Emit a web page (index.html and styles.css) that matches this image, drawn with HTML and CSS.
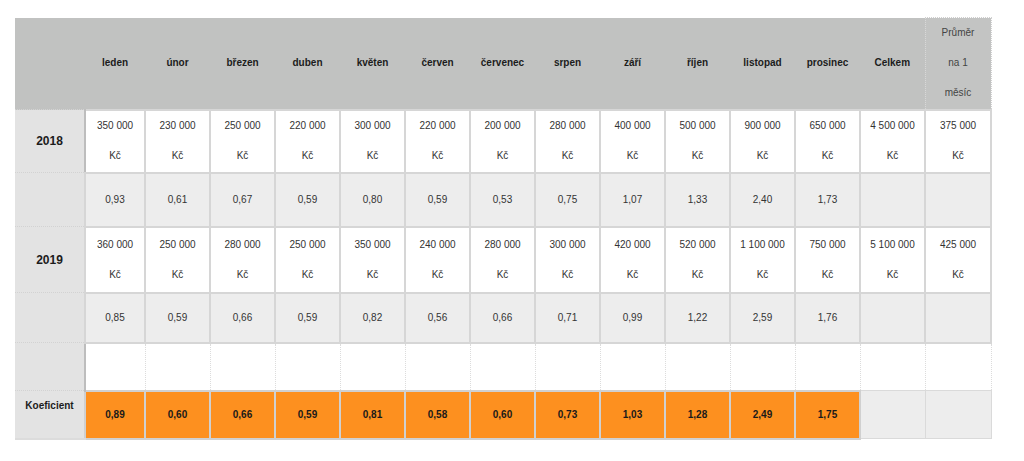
FILE: index.html
```html
<!DOCTYPE html>
<html lang="cs">
<head>
<meta charset="utf-8">
<title>Koeficienty</title>
<link rel="stylesheet" href="styles.css">
</head>
<body>
<div class="page">
<table class="grid">
  <colgroup>
    <col class="c-label"><col class="c-first">
    <col class="c-m"><col class="c-m"><col class="c-m"><col class="c-m"><col class="c-m"><col class="c-m"><col class="c-m"><col class="c-m"><col class="c-m"><col class="c-m"><col class="c-m"><col class="c-m">
    <col class="c-avg">
  </colgroup>
  <thead>
    <tr class="r-head">
      <th class="h"></th>
      <th class="h">leden</th><th class="h">únor</th><th class="h">březen</th><th class="h">duben</th><th class="h">květen</th><th class="h">červen</th><th class="h">červenec</th><th class="h">srpen</th><th class="h">září</th><th class="h">říjen</th><th class="h">listopad</th><th class="h">prosinec</th><th class="h">Celkem</th>
      <th class="h h-avg">Průměr<br>na 1<br>měsíc</th>
    </tr>
  </thead>
  <tbody>
    <tr class="r-val1">
      <th class="year">2018</th>
      <td class="v">350 000<br>Kč</td><td class="v">230 000<br>Kč</td><td class="v">250 000<br>Kč</td><td class="v">220 000<br>Kč</td><td class="v">300 000<br>Kč</td><td class="v">220 000<br>Kč</td><td class="v">200 000<br>Kč</td><td class="v">280 000<br>Kč</td><td class="v">400 000<br>Kč</td><td class="v">500 000<br>Kč</td><td class="v">900 000<br>Kč</td><td class="v">650 000<br>Kč</td><td class="v">4 500 000<br>Kč</td><td class="v">375 000<br>Kč</td>
    </tr>
    <tr class="r-coef1">
      <th class="year"></th>
      <td class="k">0,93</td><td class="k">0,61</td><td class="k">0,67</td><td class="k">0,59</td><td class="k">0,80</td><td class="k">0,59</td><td class="k">0,53</td><td class="k">0,75</td><td class="k">1,07</td><td class="k">1,33</td><td class="k">2,40</td><td class="k">1,73</td><td class="k"></td><td class="k"></td>
    </tr>
    <tr class="r-val2">
      <th class="year">2019</th>
      <td class="v">360 000<br>Kč</td><td class="v">250 000<br>Kč</td><td class="v">280 000<br>Kč</td><td class="v">250 000<br>Kč</td><td class="v">350 000<br>Kč</td><td class="v">240 000<br>Kč</td><td class="v">280 000<br>Kč</td><td class="v">300 000<br>Kč</td><td class="v">420 000<br>Kč</td><td class="v">520 000<br>Kč</td><td class="v">1 100 000<br>Kč</td><td class="v">750 000<br>Kč</td><td class="v">5 100 000<br>Kč</td><td class="v">425 000<br>Kč</td>
    </tr>
    <tr class="r-coef2">
      <th class="year"></th>
      <td class="k">0,85</td><td class="k">0,59</td><td class="k">0,66</td><td class="k">0,59</td><td class="k">0,82</td><td class="k">0,56</td><td class="k">0,66</td><td class="k">0,71</td><td class="k">0,99</td><td class="k">1,22</td><td class="k">2,59</td><td class="k">1,76</td><td class="k"></td><td class="k"></td>
    </tr>
    <tr class="r-empty">
      <th class="year"></th>
      <td class="e"></td><td class="e"></td><td class="e"></td><td class="e"></td><td class="e"></td><td class="e"></td><td class="e"></td><td class="e"></td><td class="e"></td><td class="e"></td><td class="e"></td><td class="e"></td><td class="e"></td><td class="e"></td>
    </tr>
    <tr class="r-total">
      <th class="year label">Koeficient</th>
      <td class="o">0,89</td><td class="o">0,60</td><td class="o">0,66</td><td class="o">0,59</td><td class="o">0,81</td><td class="o">0,58</td><td class="o">0,60</td><td class="o">0,73</td><td class="o">1,03</td><td class="o">1,28</td><td class="o">2,49</td><td class="o">1,75</td><td class="k"></td><td class="k"></td>
    </tr>
  </tbody>
</table>
</div>
</body>
</html>
```

FILE: styles.css
```css
html, body {
  margin: 0;
  padding: 0;
  background: #ffffff;
}

.page {
  padding: 17px 0 0 15px;
}

.grid {
  width: 976px;
  table-layout: fixed;
  border-collapse: collapse;
  font-family: "Liberation Sans", Arial, sans-serif;
  font-size: 10px;
  line-height: 30px;
  color: #333333;
  text-align: center;
}

.c-label { width: 70px; }
.c-first { width: 60px; }
.c-m { width: 65px; }
.c-avg { width: 66px; }

.grid th,
.grid td {
  padding: 0 2px;
  vertical-align: middle;
}

.r-head { height: 92px; }
.r-val1 { height: 63px; }
.r-coef1 { height: 54px; }
.r-val2 { height: 66px; }
.r-coef2 { height: 50px; }
.r-empty { height: 48px; }
.r-total { height: 48px; }

.h {
  background: #c1c2c1;
  color: #1c1c1c;
  font-weight: bold;
}

.h-avg {
  background: #c3c4c3;
  color: #444444;
  font-weight: normal;
  border-left: 1px dotted #d8d8d8;
  border-top: 1px dotted #d0d0d0;
  border-right: 1px dotted #d0d0d0;
}

.year {
  background: #e3e3e3;
  color: #1c1c1c;
  font-size: 12px;
  font-weight: bold;
  border-top: 1px dotted #d2d2d2;
  border-bottom: 1px dotted #d2d2d2;
}

.year.label {
  font-size: 10px;
  vertical-align: top;
  border-bottom: 2px solid #dcdcdc;
}

.v {
  background: #ffffff;
  border: 2px solid #d6d6d6;
}

.k {
  background: #ededed;
  border: 2px solid #d6d6d6;
}

.e {
  background: #ffffff;
  border: 1px dotted #dcdcdc;
}

.r-empty .e:first-of-type,
.r-val1 .v:first-of-type {
  border-left: 2px solid #bdbdbd;
}

.o {
  background: #fd901f;
  color: #1a1a1a;
  font-weight: bold;
  border: 2px solid #d0d0d0;
}

.r-total .k {
  border: 1px solid #dadada;
}
```
